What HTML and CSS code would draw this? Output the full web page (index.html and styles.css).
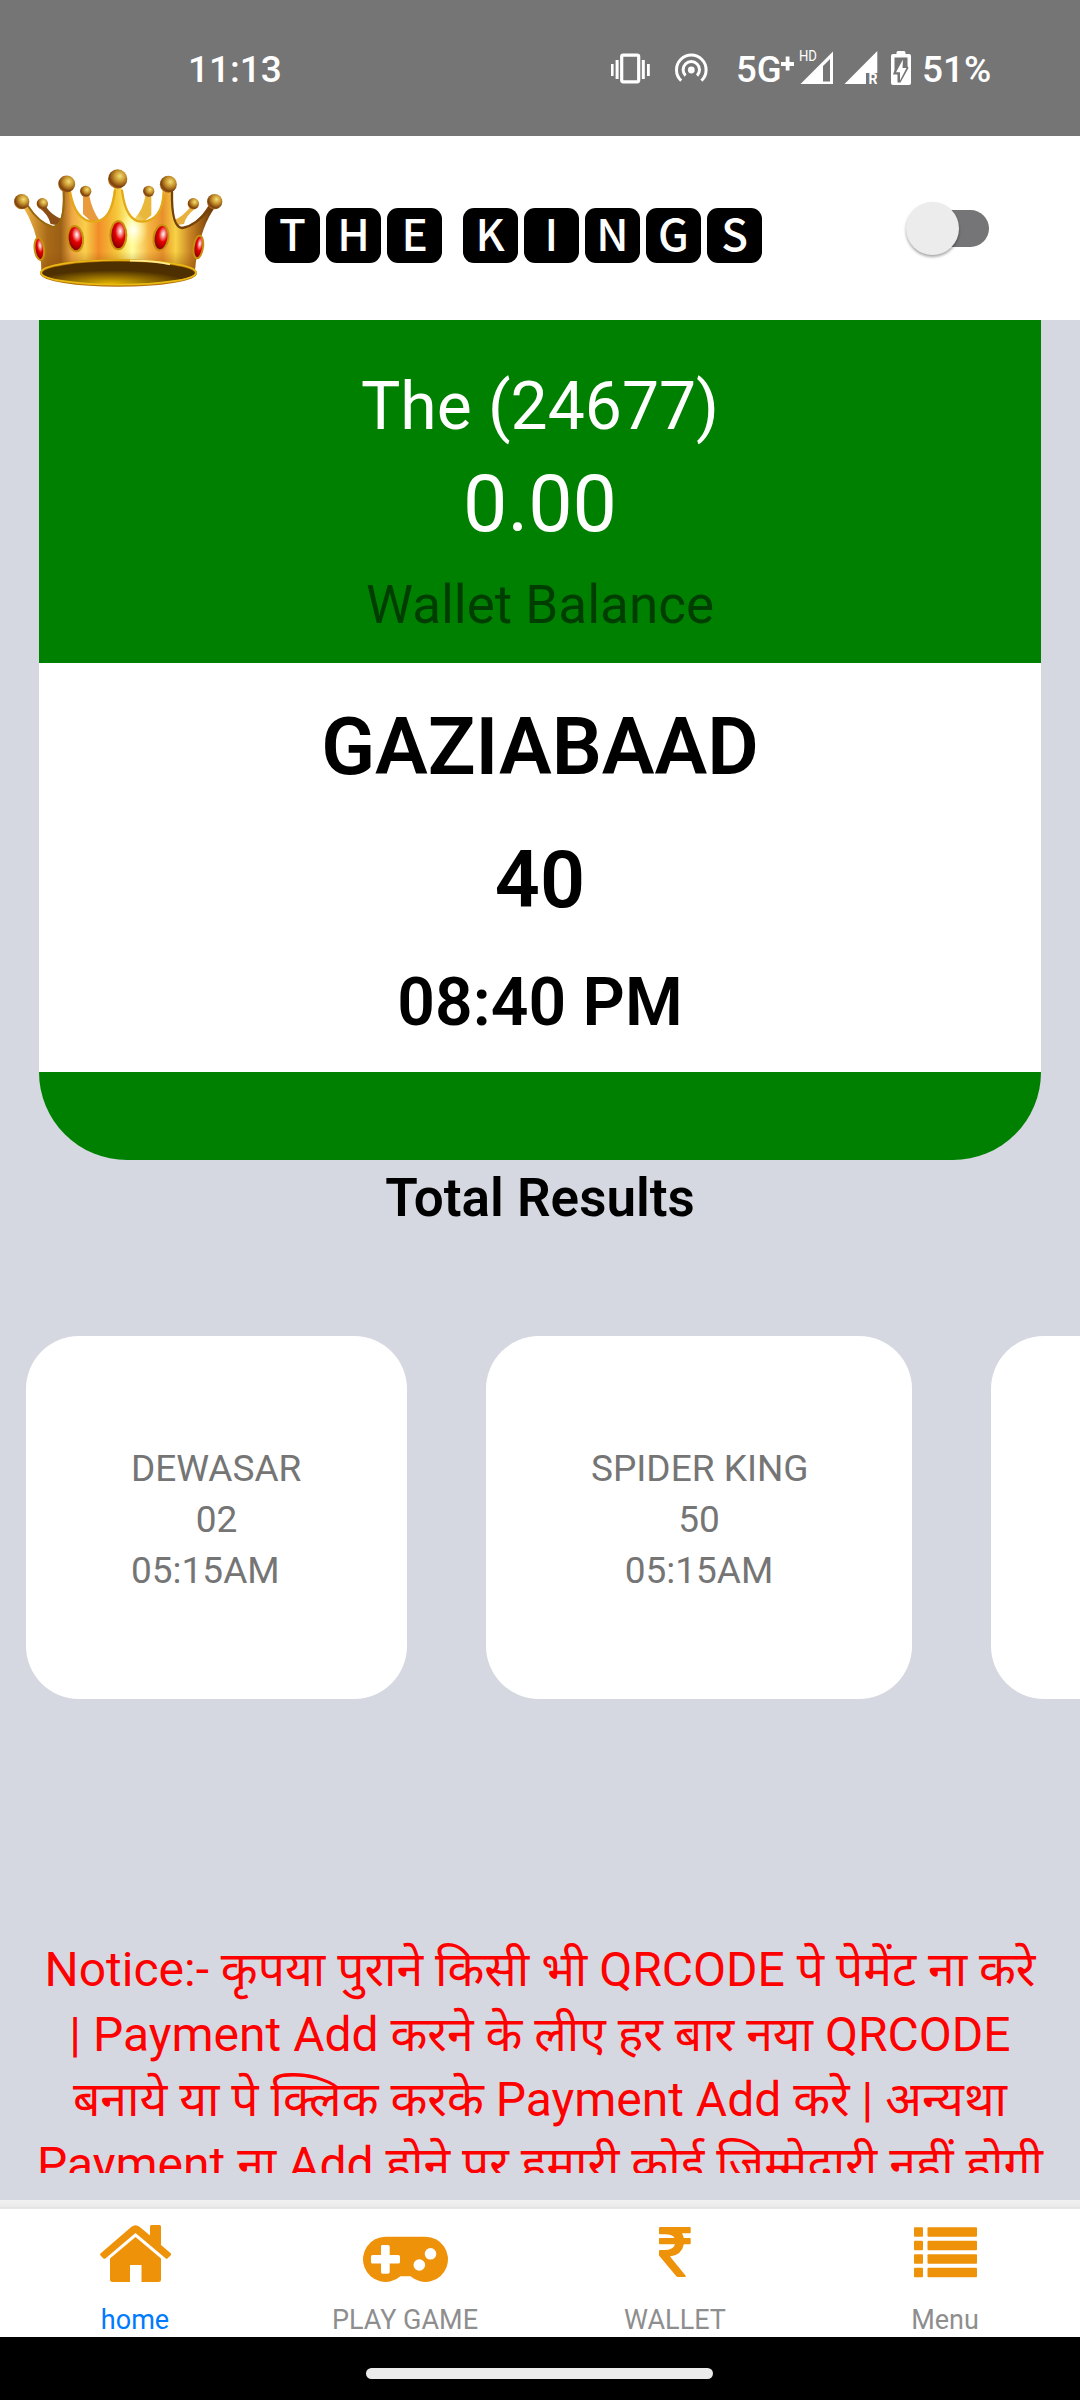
FILE: index.html
```html
<!DOCTYPE html>
<html lang="en">
<head>
<meta charset="utf-8">
<title>The Kings</title>
<link rel="stylesheet" href="styles.css">
</head>
<body>
<div class="screen">
  <div class="status">
    <span class="clock">11:13</span>
    <svg class="status-icons" viewBox="600 40 130 56" width="130" height="56">
      <g fill="#fff"><rect x="611" y="64" width="2.6" height="12"/><rect x="615.6" y="60" width="3" height="19"/><rect x="641.8" y="60" width="3" height="19"/><rect x="647" y="64" width="2.8" height="12"/><circle cx="691.3" cy="70" r="3.4"/></g>
      <rect x="621.7" y="55.2" width="17" height="26.6" rx="1.5" fill="none" stroke="#fff" stroke-width="3.2"/>
      <g fill="none" stroke="#fff" stroke-width="3"><path d="M681.2 80.7A14.8 14.8 0 1 1 701.4 80.7"/><path d="M685.5 75.6A8.2 8.2 0 1 1 697.1 75.6"/></g>
    </svg>
    <span class="net">5G</span>
    <svg class="signal" viewBox="778 40 138 56" width="138" height="56">
      <path fill="#fff" d="M785.700 56.500H789.500V62H794V66H789.500V70.500H785.700V66H781V62H785.700Z"/>
      <path fill="#fff" fill-rule="evenodd" d="M800.500 84L833 51.5V84ZM823 66V81.500H830V59Z"/>
      <text x="799" y="61" class="hd" textLength="18" lengthAdjust="spacingAndGlyphs">HD</text>
      <path fill="#fff" d="M844.500 84L877.300 51V73H866V84Z"/>
      <text x="868.500" y="84" class="roam">R</text>
      <path fill="#fff" d="M896.500 54V52.500Q896.500 51 898 51H904Q905.500 51 905.500 52.500V54H909Q911 54 911 56V83Q911 85 909 85H893Q891 85 891 83V56Q891 54 893 54Z"/>
      <path fill="#757575" d="M894.500 57.500H907.500V66L908.500 68L900.500 82.500H897.500V74.500H893L894.500 70Z"/>
      <path fill="#fff" d="M903 59.500L896 72.300H900V80.500L906.500 68H902.500Z"/>
    </svg>
    <span class="pct">51%</span>
  </div>

  <header class="header">
    <svg class="crown" viewBox="0 0 780 540" width="260" height="180">
      <defs>
        <radialGradient id="ball" cx=".62" cy=".35" r=".7"><stop offset="0" stop-color="#f3e075"/><stop offset=".4" stop-color="#c9952e"/><stop offset=".8" stop-color="#7c3f0c"/><stop offset="1" stop-color="#c07a1c"/></radialGradient>
        <linearGradient id="gold" x1="75" x2="640" gradientUnits="userSpaceOnUse"><stop offset="0" stop-color="#f0b545"/><stop offset=".12" stop-color="#a96a17"/><stop offset=".19" stop-color="#9b5f16"/><stop offset=".25" stop-color="#f0a743"/><stop offset=".32" stop-color="#f8d04b"/><stop offset=".39" stop-color="#f18d28"/><stop offset=".49" stop-color="#f6c93b"/><stop offset=".57" stop-color="#ffffa0"/><stop offset=".66" stop-color="#f5b341"/><stop offset=".73" stop-color="#e88f2c"/><stop offset=".8" stop-color="#f7d344"/><stop offset=".88" stop-color="#c78022"/><stop offset="1" stop-color="#683505"/></linearGradient>
        <linearGradient id="shade" x2="0" y2="1"><stop offset=".75" stop-color="#8d4c05" stop-opacity="0"/><stop offset="1" stop-color="#8d4c05" stop-opacity=".55"/></linearGradient>
        <radialGradient id="shine"><stop offset="0" stop-color="#fff"/><stop offset="1" stop-color="#ffffa0" stop-opacity="0"/></radialGradient>
        <radialGradient id="ruby" cx=".62" cy=".35" r=".65"><stop offset="0" stop-color="#fff"/><stop offset=".25" stop-color="#f47a7a"/><stop offset=".48" stop-color="#e60000"/><stop offset="1" stop-color="#800000"/></radialGradient>
        <radialGradient id="inside" cx=".45" cy=".9" r=".5"><stop offset="0" stop-color="#e1b200"/><stop offset="1" stop-color="#4e3000"/></radialGradient>
      </defs>
      <path d="M118 204L138 200Q155 225 186 238L172 256L152 252Q144 222 118 204Z" fill="#8a4d15"/>
      <path d="M249 168H268Q276 210 299 242L275 246L249 222Z" fill="#e89a3d"/>
      <path d="M436 168H454V226L430 246L401 240Q430 208 436 168Z" fill="#e9b83b"/>
      <path d="M572 200L588 204Q558 226 552 252L528 256L523 240Q550 228 572 200Z" fill="#e8b03c"/>
      <path d="M68 198L84 196Q112 245 158 258Q193 258 188 150H210Q224 246 283 246Q332 246 342 145H366Q378 246 426 246Q488 242 494 150H515Q512 257 547 263Q590 256 626 196L644 203Q596 270 584 398H125Q120 280 68 198Z" fill="url(#gold)"/>
      <path d="M68 198L84 196Q112 245 158 258Q193 258 188 150H210Q224 246 283 246Q332 246 342 145H366Q378 246 426 246Q488 242 494 150H515Q512 257 547 263Q590 256 626 196L644 203Q596 270 584 398H125Q120 280 68 198Z" fill="url(#shade)"/>
      <ellipse cx="400" cy="270" rx="44" ry="54" fill="url(#shine)"/>
      <g fill="none" stroke-linecap="round"><path d="M84 198Q116 248 158 261Q196 258 191 155" stroke="#98680d" stroke-width="6"/><path d="M210 155Q226 246 283 245Q334 244 345 152M366 152Q378 246 426 245Q488 242 491 155" stroke="#e3a916" stroke-width="7"/><path d="M516 155Q514 262 547 264Q590 256 630 202" stroke="#774209" stroke-width="7"/></g>
      <ellipse cx="355.500" cy="399" rx="233" ry="39" fill="url(#inside)"/>
      <ellipse cx="355.500" cy="399" rx="232" ry="38" fill="none" stroke="#b6720a" stroke-width="7"/>
      <path d="M123 398A232 38 0 0 1 588 398A232 36 0 0 1 123 398Z" fill="none" stroke="#e9b914" stroke-width="5"/>
      <path d="M390 362Q470 363 510 373" stroke="#ffee92" stroke-width="5" fill="none"/>
      <g fill="url(#ball)"><circle cx="65" cy="185" r="23"/><circle cx="127" cy="191" r="17"/><circle cx="200" cy="132" r="25.500"/><circle cx="257" cy="154" r="17"/><circle cx="353" cy="117" r="29"/><circle cx="446" cy="154" r="17"/><circle cx="505" cy="133" r="25.500"/><circle cx="580" cy="191" r="17"/><circle cx="644" cy="185" r="23"/></g>
      <g fill="url(#ruby)" stroke="#c8900f" stroke-width="6"><ellipse cx="118" cy="327" rx="14" ry="33" transform="rotate(-7 118 327)"/><ellipse cx="226" cy="296" rx="23" ry="38" transform="rotate(-6 226 296)"/><ellipse cx="355" cy="286" rx="24" ry="42"/><ellipse cx="483" cy="293" rx="22" ry="38" transform="rotate(8 483 293)"/><ellipse cx="595" cy="321" rx="14" ry="34" transform="rotate(8 595 321)"/></g>
    </svg>
    <h1 class="title">
      <span class="word"><i>T</i><i>H</i><i>E</i></span>
      <span class="word"><i>K</i><i>I</i><i>N</i><i>G</i><i>S</i></span>
    </h1>
    <div class="switch"><div class="thumb"></div></div>
  </header>

  <main class="content">
    <section class="account">
      <div class="wallet">
        <p class="user">The (24677)</p>
        <p class="amount">0.00</p>
        <p class="caption">Wallet Balance</p>
      </div>
      <div class="latest">
        <p class="market">GAZIABAAD</p>
        <p class="number">40</p>
        <p class="time">08:40 PM</p>
      </div>
    </section>
    <h2 class="total">Total Results</h2>
    <section class="results">
      <div class="card"><p>DEWASAR</p><p class="mid">02</p><p>05:15AM</p></div>
      <div class="card centered"><p>SPIDER KING</p><p>50</p><p>05:15AM</p></div>
      <div class="card next"></div>
    </section>
    <div class="notice">
      <p>Notice:- कृपया पुराने किसी भी QRCODE पे पेमेंट ना करे</p>
      <p>| Payment Add करने के लीए हर बार नया QRCODE</p>
      <p>बनाये या पे क्लिक करके Payment Add करे | अन्यथा</p>
      <p>Payment ना Add होने पर हमारी कोई जिम्मेदारी नहीं होगी</p>
    </div>
  </main>

  <nav class="tabs">
    <a class="tab active">
      <svg viewBox="95 2220 80 65" width="80" height="65" fill="#ee920a">
        <path d="M100.500 2253.500Q99.500 2254.500 100.500 2255.500L103.500 2258.500Q104.500 2259.300 105.700 2258.300L135.500 2233L165.500 2258.300Q166.700 2259.300 167.700 2258.300L170.800 2255.300Q171.700 2254.200 170.700 2253.200L161 2245V2226.500Q161 2225 159.500 2225H151.500Q150 2225 150 2226.500V2235.500L139.500 2226.800Q135.500 2223.500 131.500 2226.800Z"/>
        <path d="M135.500 2237L110 2258.500V2279.500Q110 2282 112.500 2282H130V2265H141.500V2282H158.500Q161 2282 161 2279.500V2258.500Z"/>
      </svg>
      <span>home</span>
    </a>
    <a class="tab">
      <svg viewBox="360 2220 91 65" width="91" height="65" fill="#ee920a">
        <path fill-rule="evenodd" d="M385.500 2236.700H425.500A22.600 22.600 0 1 1 410.500 2276.300H400.500A22.600 22.600 0 1 1 385.500 2236.700ZM381 2246V2255H372.500Q371 2255 371 2256.500V2262Q371 2263.500 372.500 2263.500H381V2272Q381 2273.700 382.500 2273.700H388Q389.700 2273.700 389.700 2272V2263.500H398.200Q400 2263.500 400 2262V2256.500Q400 2255 398.200 2255H389.700V2246.500Q389.700 2245 388 2245H382.500Q381 2245 381 2246Z"/>
        <g fill="#fff"><circle cx="430.500" cy="2253.800" r="5.800"/><circle cx="419.300" cy="2265" r="5.800"/></g>
      </svg>
      <span>PLAY GAME</span>
    </a>
    <a class="tab">
      <svg viewBox="650 2220 50 65" width="50" height="65" fill="#ee920a">
        <path d="M660 2227H689.700Q690.700 2227 690.700 2228V2232.300Q690.700 2233.300 689.700 2233.300H682Q683.200 2235.500 683.700 2238H689.700Q690.700 2238 690.700 2239V2243.200Q690.700 2244.200 689.700 2244.200H683.800Q682 2254.800 670 2256.500L685.500 2275.500Q686.500 2277 684.800 2277H678Q677 2277 676.300 2276.200L659 2255.500V2251Q659 2250 660 2250H664Q673.500 2250 675 2244.200H660Q659 2244.200 659 2243.200V2239Q659 2238 660 2238H674.500Q672.500 2234.300 665 2234.300H660Q659 2234.300 659 2233.300V2228Q659 2227 660 2227Z"/>
      </svg>
      <span>WALLET</span>
    </a>
    <a class="tab">
      <svg viewBox="910 2220 71 65" width="71" height="65" fill="#ee920a">
        <rect x="914" y="2227.200" width="9" height="9.500" rx="1"/><rect x="927.500" y="2227.200" width="49.500" height="9.500" rx="1"/>
        <rect x="914" y="2240.800" width="9" height="9.500" rx="1"/><rect x="927.500" y="2240.800" width="49.500" height="9.500" rx="1"/>
        <rect x="914" y="2254.300" width="9" height="9.500" rx="1"/><rect x="927.500" y="2254.300" width="49.500" height="9.500" rx="1"/>
        <rect x="914" y="2267.800" width="9" height="9.500" rx="1"/><rect x="927.500" y="2267.800" width="49.500" height="9.500" rx="1"/>
      </svg>
      <span>Menu</span>
    </a>
  </nav>
  <div class="gesture"><div class="handle"></div></div>
</div>
</body>
</html>
```
FILE: styles.css
```css
* { box-sizing: border-box; margin: 0; padding: 0; }
body { font-family: Roboto, "Noto Sans Devanagari", "Noto Sans", sans-serif; background: #d6d8e1; }
svg { display: block; flex: none; }
.screen { width: 1080px; height: 2400px; display: flex; flex-direction: column; overflow: hidden; background: #d6d8e1; }

.status { height: 136px; background: #757575; color: #fff; display: flex; align-items: flex-start; padding-top: 41px; font-size: 37px; font-weight: 500; line-height: 57px; white-space: nowrap; }
.clock { margin-left: 188px; width: 412px; }
.status-icons { margin-top: -1px; }
.net { width: 48px; padding-left: 6px; font-size: 36.500px; }
.signal { margin-top: -1px; }
.hd { font-size: 15px; fill: #fff; font-weight: 400; }
.roam { font-size: 14px; fill: #fff; font-weight: 700; }
.pct { padding-left: 6px; }

.header { height: 184px; background: #fff; display: flex; align-items: flex-start; }
.crown { margin-top: 4px; }
.title { display: flex; gap: 20.500px; width: 498px; margin: 72px 0 0 5px; font-weight: 500; }
.word { display: flex; gap: 6.100px; }
.word i { width: 55px; height: 55px; border-radius: 11px; background: #000; color: #fff; font: 500 44px/48px "Noto Sans CJK JP", "Noto Sans", sans-serif; text-align: center; }
.switch { width: 74px; height: 37px; margin: 74px 0 0 152px; border-radius: 19px; background: #757577; }
.thumb { width: 53px; height: 53px; margin: -8px 0 0 -9px; border-radius: 50%; background: #ececec; box-shadow: 0 2px 3px rgba(0, 0, 0, .35); }

.content { flex: 1; min-height: 0; }
.account { margin: 0 39px; border-radius: 0 0 88px 88px; background: #008000; height: 840px; text-align: center; }
.wallet { height: 343px; padding-top: 48px; color: #fff; }
.user { font-size: 66px; line-height: 78px; }
.amount { font-size: 79px; line-height: 94px; margin-top: 11px; }
.caption { font-size: 53px; line-height: 62px; margin-top: 23px; color: #003d00; }
.latest { height: 409px; padding-top: 37px; background: #fff; color: #000; font-weight: 600; }
.market, .number { font-size: 79px; line-height: 94px; }
.number { margin-top: 39px; }
.time { font-size: 66px; line-height: 78px; margin-top: 37px; }
.total { height: 62px; margin-top: 7px; font-size: 53px; line-height: 62px; font-weight: 600; text-align: center; color: #000; }
.results { display: flex; gap: 79px; margin: 107px 0 0 26px; overflow: hidden; }
.card { flex: none; height: 363px; border-radius: 53px; background: #fff; color: #757575; font-size: 37px; line-height: 51px; padding: 107px 105px 0; width: 381px; white-space: nowrap; }
.mid { text-align: center; }
.centered { text-align: center; width: 426px; }
.next { width: 400px; }
.notice { margin: 238px 0 0; height: 236px; overflow: hidden; text-align: center; color: #f00; font-size: 48px; line-height: 65px; white-space: nowrap; }
.notice p { height: 65px; }

.tabs { height: 137px; display: flex; background: linear-gradient(#f1f1f1 0, #e9e9e9 7px, #dedede 8px, #f0f0f0 9px, #fff 9px); padding-top: 9px; }
.tab { flex: 1; display: flex; flex-direction: column; align-items: center; padding-top: 11px; color: #8e8e8f; font-size: 27px; line-height: 32px; }
.tab span { margin-top: 19px; }
.active { color: #007aff; }
.gesture { height: 63px; background: #000; padding-top: 31px; }
.handle { width: 347px; height: 11px; margin: 0 0 0 366px; border-radius: 6px; background: #ebebeb; }
```
